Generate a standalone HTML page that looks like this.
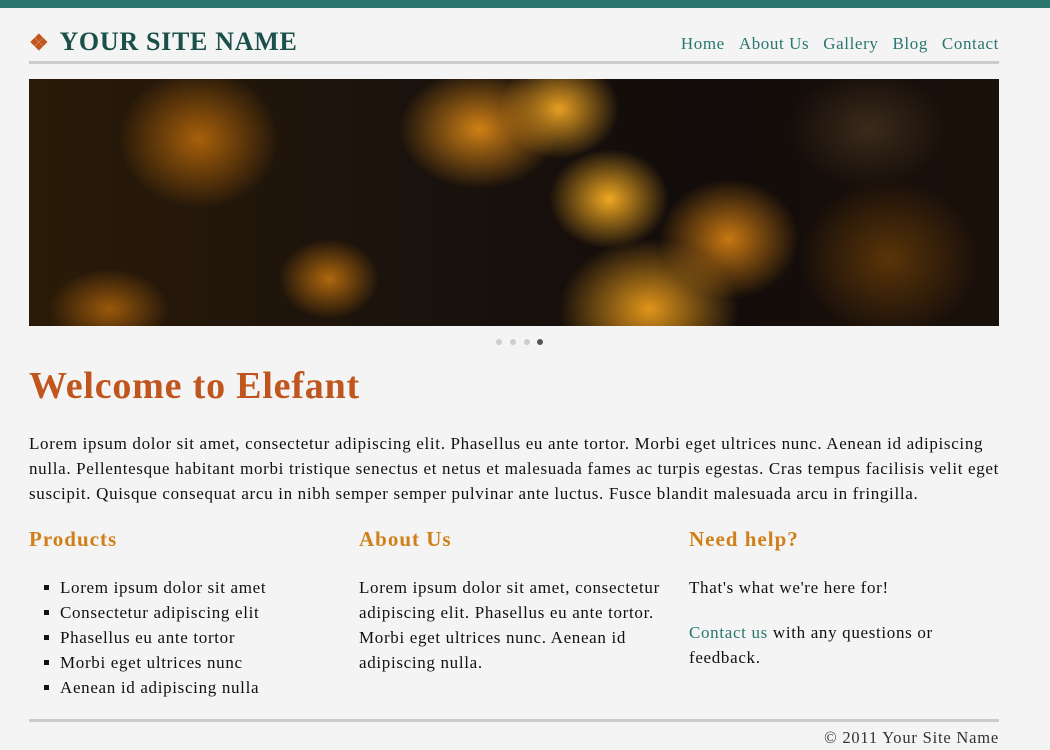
<!DOCTYPE html>
<html><head><meta charset="utf-8"><style>
*{margin:0;padding:0;box-sizing:border-box}
body{width:1050px;height:750px;background:#f4f4f4;font-family:"Liberation Serif",serif;color:#111;overflow:hidden;position:relative}
.top{position:absolute;left:0;top:0;width:1050px;height:8px;background:#2a766f}
.abs{position:absolute}
.logo{left:29px;top:27px;font-size:26px;font-weight:bold;color:#1a4f4a;letter-spacing:0.7px}
.logo span{color:#c0561e;font-size:22px;margin-right:10px}
.nav{right:51px;top:34px;font-size:17px;color:#2a766f;letter-spacing:0.6px}
.nav a{margin-left:14px}
.hr{left:29px;width:970px;height:3px;background:#ccc}
.banner{left:29px;top:79px;width:970px;height:247px;background:
radial-gradient(ellipse 60px 50px at 580px 120px,#f0a820,transparent),
radial-gradient(ellipse 90px 70px at 620px 230px,#e0951a,transparent),
radial-gradient(ellipse 80px 60px at 450px 50px,#d08015,transparent),
radial-gradient(ellipse 60px 50px at 530px 30px,#e8a022,transparent),
radial-gradient(ellipse 70px 60px at 700px 160px,#c87812,transparent),
radial-gradient(ellipse 80px 70px at 170px 60px,#a8600a,transparent),
radial-gradient(ellipse 50px 40px at 300px 200px,#b0680c,transparent),
radial-gradient(ellipse 60px 40px at 80px 230px,#9a580a,transparent),
radial-gradient(ellipse 90px 80px at 860px 180px,#5a3408,transparent),
radial-gradient(ellipse 80px 60px at 840px 50px,#3a2a1a,transparent),
linear-gradient(90deg,#2a1a08,#1a120c 40%,#120c0a 70%,#1a100a);}
.dot{top:339px;width:6px;height:6px;border-radius:50%;background:#ccc}
h1{position:absolute;left:29px;top:364px;font-size:38px;color:#c0561e;font-weight:bold;letter-spacing:0.8px}
.p{left:29px;top:431px;width:975px;font-size:17px;line-height:25px;letter-spacing:0.67px}
h3{position:absolute;top:527px;font-size:21px;color:#d0801a;font-weight:bold;letter-spacing:1px}
.col{top:575px;font-size:17px;line-height:25px;letter-spacing:0.67px}
ul{list-style:none}
li:before{content:"";display:inline-block;width:5px;height:5px;background:#111;margin:0 11px 3px 15px}
.foot{right:51px;top:728px;font-size:16.5px;color:#333;letter-spacing:0.8px}
</style></head><body>
<div class="top"></div>
<div class="abs logo"><span>❖</span>YOUR SITE NAME</div>
<div class="abs nav"><a>Home</a><a>About Us</a><a>Gallery</a><a>Blog</a><a>Contact</a></div>
<div class="abs hr" style="top:61px"></div>
<div class="abs banner"></div>
<div class="abs dot" style="left:496px"></div>
<div class="abs dot" style="left:510px"></div>
<div class="abs dot" style="left:524px"></div>
<div class="abs dot" style="left:537px;background:#555"></div>
<h1>Welcome to Elefant</h1>
<div class="abs p">Lorem ipsum dolor sit amet, consectetur adipiscing elit. Phasellus eu ante tortor. Morbi eget ultrices nunc. Aenean id adipiscing nulla. Pellentesque habitant morbi tristique senectus et netus et malesuada fames ac turpis egestas. Cras tempus facilisis velit eget suscipit. Quisque consequat arcu in nibh semper semper pulvinar ante luctus. Fusce blandit malesuada arcu in fringilla.</div>
<h3 style="left:29px">Products</h3>
<h3 style="left:359px">About Us</h3>
<h3 style="left:689px">Need help?</h3>
<div class="abs col" style="left:29px;width:310px"><ul><li>Lorem ipsum dolor sit amet</li><li>Consectetur adipiscing elit</li><li>Phasellus eu ante tortor</li><li>Morbi eget ultrices nunc</li><li>Aenean id adipiscing nulla</li></ul></div>
<div class="abs col" style="left:359px;width:318px">Lorem ipsum dolor sit amet, consectetur adipiscing elit. Phasellus eu ante tortor. Morbi eget ultrices nunc. Aenean id adipiscing nulla.</div>
<div class="abs col" style="left:689px;width:300px">That's what we're here for!<br><div style="height:20px"></div><span style="color:#2a766f">Contact us</span> with any questions or feedback.</div>
<div class="abs hr" style="top:719px"></div>
<div class="abs foot">© 2011 Your Site Name</div>
</body></html>
